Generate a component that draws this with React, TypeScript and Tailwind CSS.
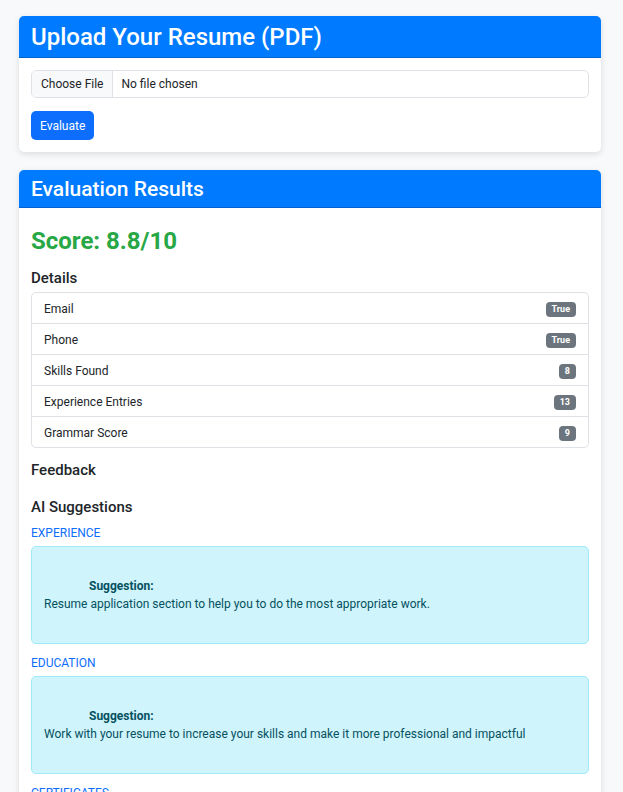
import { FC } from "react";

const details = [
  { label: "Email", value: "True" },
  { label: "Phone", value: "True" },
  { label: "Skills Found", value: "8" },
  { label: "Experience Entries", value: "13" },
  { label: "Grammar Score", value: "9" },
];

const suggestions = [
  {
    section: "EXPERIENCE",
    text: "Resume application section to help you to do the most appropriate work.",
  },
  {
    section: "EDUCATION",
    text: "Work with your resume to increase your skills and make it more professional and impactful",
  },
  {
    section: "CERTIFICATES",
    text: "Add certifications that match the roles you are applying for.",
  },
];

const CardHeader: FC<{ title: string; big?: boolean }> = ({ title, big }) => (
  <div className="bg-[#007bff] px-3 pt-[7px] pb-[5px] border-b border-[#0062cc]">
    <h2
      className={
        big
          ? "text-[24px] leading-[29px] font-medium text-white"
          : "text-[21px] leading-[25px] font-medium text-white"
      }
    >
      {title}
    </h2>
  </div>
);

export default function App() {
  return (
    <div className="min-h-screen bg-[#f8f9fa] pt-4 pl-[19px] pr-[22px] font-['Roboto','Liberation_Sans',sans-serif] text-[12px] leading-[18px] text-[#212529]">
      <div className="rounded-[5px] bg-white shadow-[0_2px_6px_rgba(0,0,0,0.12)] overflow-hidden">
        <CardHeader title="Upload Your Resume (PDF)" big />
        <div className="p-3">
          <div className="flex h-[28px] items-stretch rounded-[5px] border border-[#dee2e6] overflow-hidden">
            <span className="flex items-center bg-[#f8f9fa] px-[9px] border-r border-[#dee2e6]">
              Choose File
            </span>
            <span className="flex items-center pl-[8px]">No file chosen</span>
          </div>
          <button className="mt-[13px] h-[29px] rounded-[5px] bg-[#0d6efd] px-[9px] text-white">
            Evaluate
          </button>
        </div>
      </div>

      <div className="mt-[18px] rounded-t-[5px] bg-white shadow-[0_2px_6px_rgba(0,0,0,0.12)] overflow-hidden">
        <CardHeader title="Evaluation Results" />
        <div className="p-3">
          <h2 className="mt-[7px] text-[24px] leading-[29px] font-bold text-[#28a745]">
            Score: 8.8/10
          </h2>
          <h5 className="mt-[13px] mb-[5px] text-[15px] leading-[18px] font-medium">
            Details
          </h5>
          <ul className="rounded-[5px] border border-[#dee2e6]">
            {details.map((d, i) => (
              <li
                key={d.label}
                className={
                  "flex items-center justify-between px-3 pt-[7px] pb-[5px] " +
                  (i > 0 ? "border-t border-[#dee2e6]" : "")
                }
              >
                <span>{d.label}</span>
                <span className="rounded-[4px] bg-[#6c757d] px-[6px] py-[3px] text-[9px] leading-[9px] font-bold text-white">
                  {d.value}
                </span>
              </li>
            ))}
          </ul>
          <h5 className="mt-[13px] text-[15px] leading-[18px] font-medium">Feedback</h5>
          <h5 className="mt-[19px] mb-[10px] text-[15px] leading-[18px] font-medium">
            AI Suggestions
          </h5>
          {suggestions.map((s) => (
            <div key={s.section} className="mb-3">
              <h6 className="mb-[5px] text-[12px] leading-[15px] font-normal text-[#0d6efd]">
                {s.section}
              </h6>
              <div className="rounded-[5px] border border-[#9eeaf9] bg-[#cff4fc] px-3 py-[30px] text-[#055160]">
                <strong className="block pl-[45px] font-bold">Suggestion:</strong>
                <p>{s.text}</p>
              </div>
            </div>
          ))}
        </div>
      </div>
    </div>
  );
}
